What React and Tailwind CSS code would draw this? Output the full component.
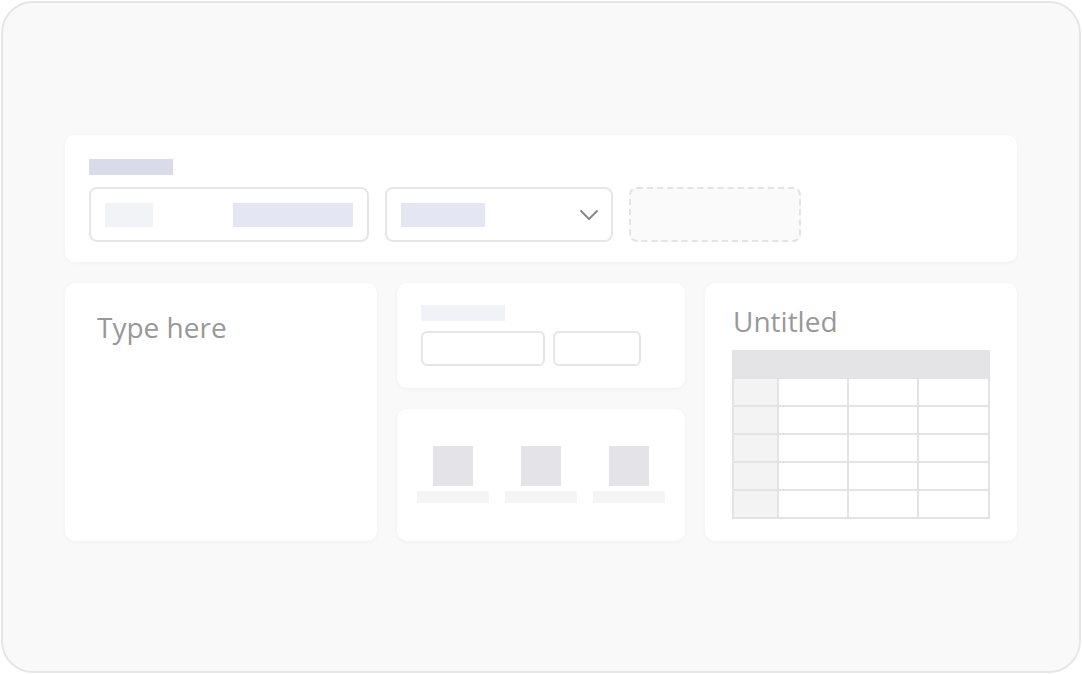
export default function App() {
  const font = { fontFamily: '"Open Sans", "Noto Sans", sans-serif' };
  const rows = [0, 1, 2, 3, 4];
  return (
    <div className="w-[1082px] h-[674px] bg-white p-px" style={font}>
      <div className="w-full h-full rounded-[32px] border-2 border-[#e6e6e6] bg-[#f9f9f9] flex items-center justify-center">
        <div className="w-[952px] flex flex-col gap-[21px] mt-[2px]">
          {/* Top card */}
          <div className="h-[127px] bg-white rounded-[10px] shadow-[0_1px_4px_rgba(0,0,0,0.04)] px-6 pt-6 flex flex-col gap-3">
            <div className="w-[84px] h-4 bg-[#d9dbe9]" />
            <div className="flex gap-4">
              <div className="w-[280px] h-[55px] rounded-lg border-2 border-[#e6e6e6] flex items-center justify-between px-[14px]">
                <div className="w-12 h-6 bg-[#f2f3f6]" />
                <div className="w-[120px] h-6 bg-[#e5e6f3]" />
              </div>
              <div className="w-[228px] h-[55px] rounded-lg border-2 border-[#e6e6e6] flex items-center justify-between pl-[14px] pr-[12px]">
                <div className="w-[84px] h-6 bg-[#e5e6f3]" />
                <svg width="20" height="20" viewBox="0 0 20 20" fill="none">
                  <path d="M2 6 L10 14 L18 6" stroke="#858585" strokeWidth="1.8" strokeLinecap="round" strokeLinejoin="round" />
                </svg>
              </div>
              <div className="w-[172px] h-[55px] rounded-lg border-2 border-dashed border-[#e3e3e3] bg-[#fafafa]" />
            </div>
          </div>

          {/* Bottom row */}
          <div className="grid grid-cols-[312px_288px_312px] gap-5">
            <div className="h-[258px] bg-white rounded-[10px] shadow-[0_1px_4px_rgba(0,0,0,0.04)] pl-[32px] pt-[25px]">
              <div className="text-[28px] leading-[38px] text-[#999999]">Type here</div>
            </div>

            <div className="flex flex-col gap-[21px]">
              <div className="h-[105px] bg-white rounded-[10px] shadow-[0_1px_4px_rgba(0,0,0,0.04)] px-6 pt-[22px] flex flex-col gap-[10px]">
                <div className="w-[84px] h-4 bg-[#f0f2f7]" />
                <div className="flex gap-2">
                  <div className="w-[124px] h-[35px] rounded-md border-2 border-[#e6e6e6]" />
                  <div className="w-[88px] h-[35px] rounded-md border-2 border-[#e6e6e6]" />
                </div>
              </div>
              <div className="h-[132px] bg-white rounded-[10px] shadow-[0_1px_4px_rgba(0,0,0,0.04)] px-5 pt-[37px] flex gap-4">
                {[0, 1, 2].map((i) => (
                  <div key={i} className="w-[72px] flex flex-col items-center gap-[5px]">
                    <div className="w-10 h-10 bg-[#e4e4e8]" />
                    <div className="w-[72px] h-3 bg-[#f4f4f5]" />
                  </div>
                ))}
              </div>
            </div>

            <div className="h-[258px] bg-white rounded-[10px] shadow-[0_1px_4px_rgba(0,0,0,0.04)] pl-[27px] pt-[19px]">
              <div className="text-[28px] leading-[38px] text-[#999999] pl-[1px]">Untitled</div>
              <div className="mt-[10px] w-[258px] border-2 border-[#e3e3e3]">
                <div className="h-[25px] bg-[#e4e4e6]" />
                {rows.map((r) => (
                  <div key={r} className="grid grid-cols-[45px_70px_70px_1fr] h-[28px] border-t-2 border-[#e3e3e3]">
                    <div className="bg-[#f3f3f3] border-r-2 border-[#e3e3e3]" />
                    <div className="border-r-2 border-[#e3e3e3]" />
                    <div className="border-r-2 border-[#e3e3e3]" />
                    <div />
                  </div>
                ))}
              </div>
            </div>
          </div>
        </div>
      </div>
    </div>
  );
}
